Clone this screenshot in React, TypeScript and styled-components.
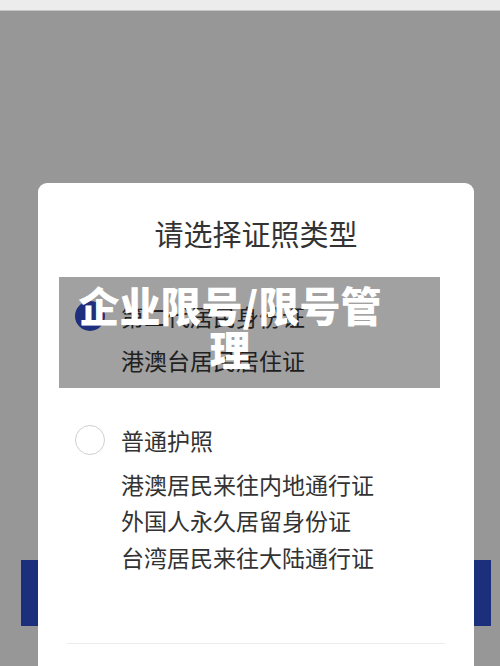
import styled, { createGlobalStyle } from "styled-components"

const GlobalStyle = createGlobalStyle`
  html, body {
    margin: 0;
    padding: 0;
    background: #979797;
    font-family: "Noto Sans CJK SC", "Noto Sans", sans-serif;
  }
`

const Screen = styled.div`
  position: relative;
  width: 500px;
  height: 666px;
  overflow: hidden;
`

const TopBar = styled.div`
  height: 10px;
  background: #ececec;
  border-bottom: 1px solid #c6c6c6;
`

const PageBody = styled.div`
  display: flex;
  flex-direction: column;
  padding: 549px 9px 0 21px;
`

const SubmitButton = styled.div`
  height: 66px;
  background: #1b2f7d;
`

const Modal = styled.div`
  position: absolute;
  left: 38px;
  top: 183px;
  width: 436px;
  bottom: 0;
  background: #fff;
  border-radius: 9px 9px 0 0;
  display: flex;
  flex-direction: column;
  padding-top: 30px;
`

const Title = styled.div`
  font-size: 29px;
  line-height: 40px;
  color: #333;
  text-align: center;
`

const OptionList = styled.div`
  display: flex;
  flex-direction: column;
  gap: 43px;
  margin-top: 45px;
  padding-left: 37px;
`

const Option = styled.div`
  display: flex;
  flex-direction: column;
`

const OptionRow = styled.div`
  display: flex;
  align-items: center;
  gap: 16px;
`

const Radio = styled.span<{ $checked?: boolean }>`
  flex: none;
  width: 30px;
  height: 30px;
  box-sizing: border-box;
  border-radius: 50%;
  border: ${(p) => (p.$checked ? "none" : "1px solid #cfcfcf")};
  background: ${(p) => (p.$checked ? "#2e4bc6" : "#fff")};
`

const Label = styled.span`
  font-size: 23px;
  line-height: 36px;
  color: #333;
`

const Descriptions = styled.div`
  display: flex;
  flex-direction: column;
  margin-top: 8px;
  padding-left: 46px;
`

const Description = styled.div`
  font-size: 23px;
  line-height: 36.5px;
  color: #333;
`

const Divider = styled.div`
  height: 1px;
  background: #ececec;
  margin: 68px 29px 0;
`

const Watermark = styled.div`
  position: absolute;
  left: 59px;
  top: 277px;
  width: 381px;
  height: 111px;
  box-sizing: border-box;
  padding: 5px 48px 0 9px;
  background: rgba(0, 0, 0, 0.37);
`

const WatermarkText = styled.div`
  font-size: 41px;
  line-height: 44px;
  font-weight: 900;
  color: #fff;
  text-align: center;
`

const options = [
  { label: "第二代居民身份证", lines: ["港澳台居民居住证"], checked: true },
  {
    label: "普通护照",
    lines: ["港澳居民来往内地通行证", "外国人永久居留身份证", "台湾居民来往大陆通行证"],
    checked: false,
  },
]

export default function App() {
  return (
    <>
      <GlobalStyle />
      <Screen>
        <TopBar />
        <PageBody>
          <SubmitButton />
        </PageBody>
        <Modal>
          <Title>请选择证照类型</Title>
          <OptionList>
            {options.map((o) => (
              <Option key={o.label}>
                <OptionRow>
                  <Radio $checked={o.checked} />
                  <Label>{o.label}</Label>
                </OptionRow>
                <Descriptions>
                  {o.lines.map((l) => (
                    <Description key={l}>{l}</Description>
                  ))}
                </Descriptions>
              </Option>
            ))}
          </OptionList>
          <Divider />
        </Modal>
        <Watermark>
          <WatermarkText>企业限号/限号管理</WatermarkText>
        </Watermark>
      </Screen>
    </>
  )
}
